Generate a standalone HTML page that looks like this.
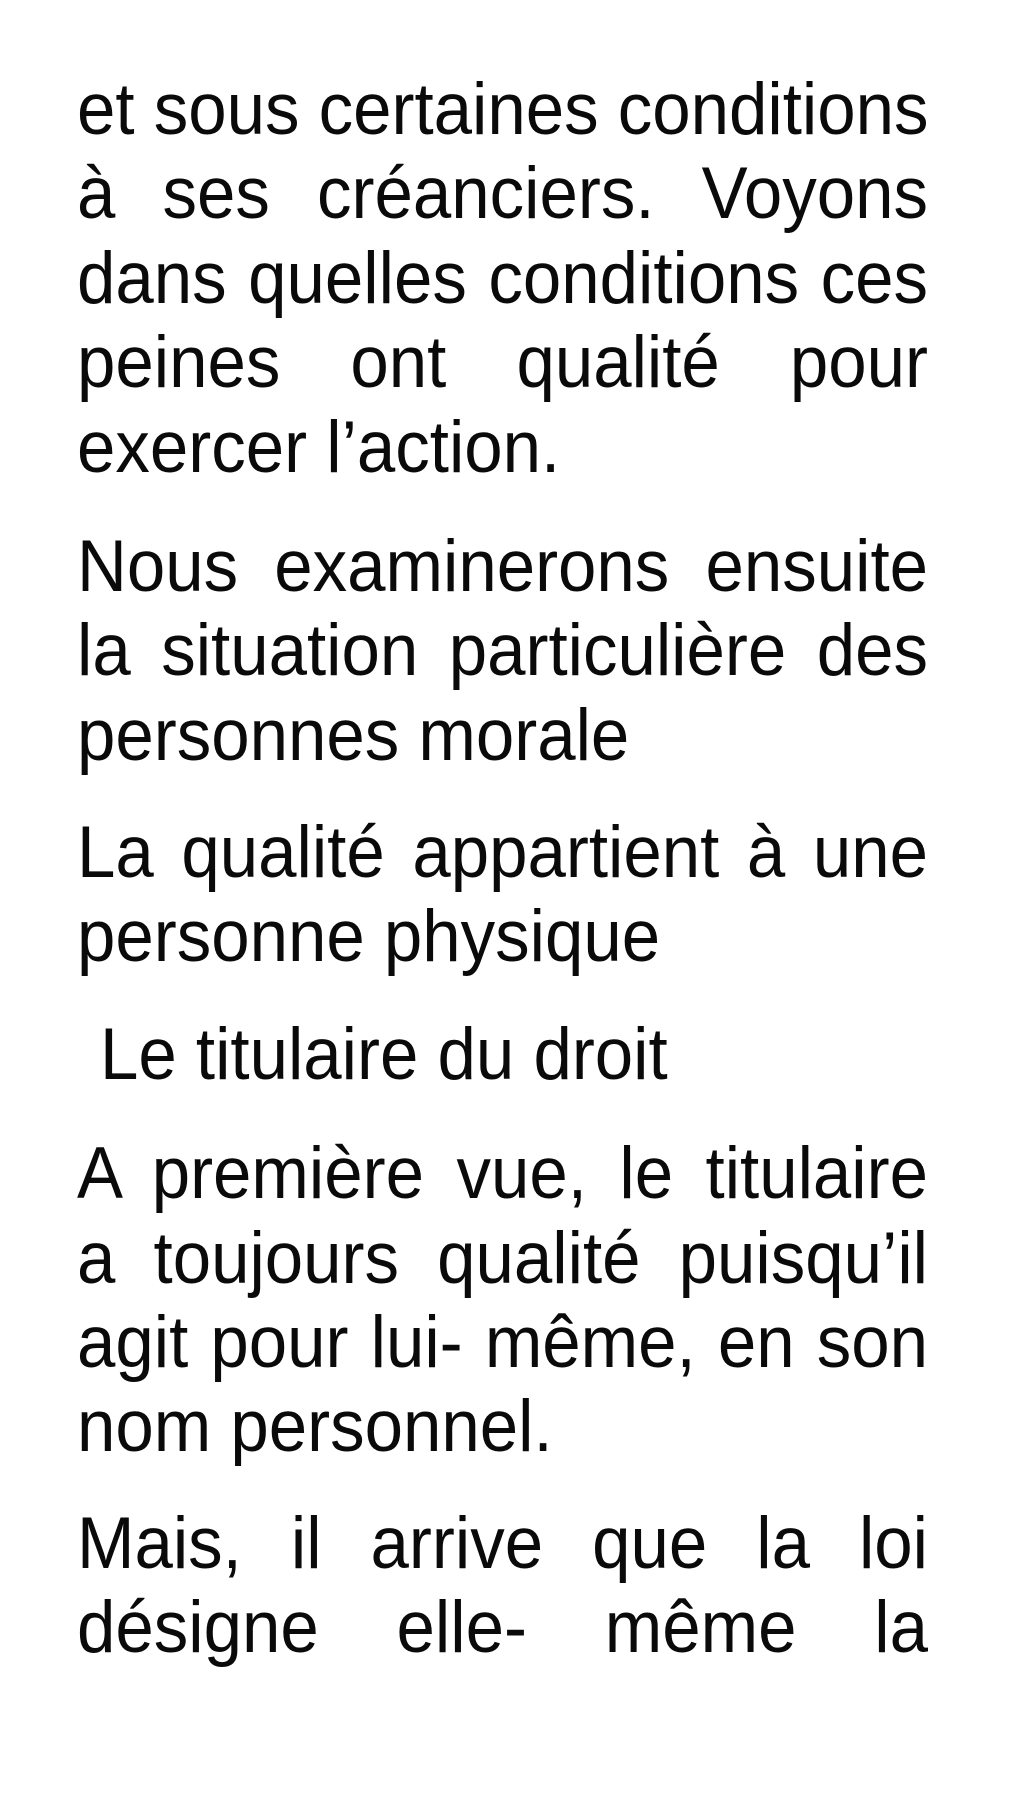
<!DOCTYPE html>
<html><head><meta charset="utf-8"><style>
html,body{margin:0;padding:0;background:#fff;}
body{width:1012px;height:1800px;position:relative;overflow:hidden;}
.l{position:absolute;left:77px;width:851px;font-family:"Liberation Sans",sans-serif;font-size:69px;line-height:69px;color:#0a0a0a;white-space:nowrap;transform:scaleY(1.06);transform-origin:0 58px;}
.j{text-align:justify;text-align-last:justify;}
</style></head><body>
<div class="l j" style="top:76px">et sous certaines conditions</div>
<div class="l j" style="top:160px">à ses créanciers. Voyons</div>
<div class="l j" style="top:245px">dans quelles conditions ces</div>
<div class="l j" style="top:329px">peines ont qualité pour</div>
<div class="l" style="top:414px">exercer l’action.</div>
<div class="l j" style="top:533px">Nous examinerons ensuite</div>
<div class="l j" style="top:617px">la situation particulière des</div>
<div class="l" style="top:702px">personnes morale</div>
<div class="l j" style="top:819px">La qualité appartient à une</div>
<div class="l" style="top:903px">personne physique</div>
<div class="l" style="top:1021px;left:100px">Le titulaire du droit</div>
<div class="l j" style="top:1140px">A première vue, le titulaire</div>
<div class="l j" style="top:1225px">a toujours qualité puisqu’il</div>
<div class="l j" style="top:1309px">agit pour lui- même, en son</div>
<div class="l" style="top:1393px">nom personnel.</div>
<div class="l j" style="top:1510px">Mais, il arrive que la loi</div>
<div class="l j" style="top:1594px">désigne elle- même la</div>
</body></html>
